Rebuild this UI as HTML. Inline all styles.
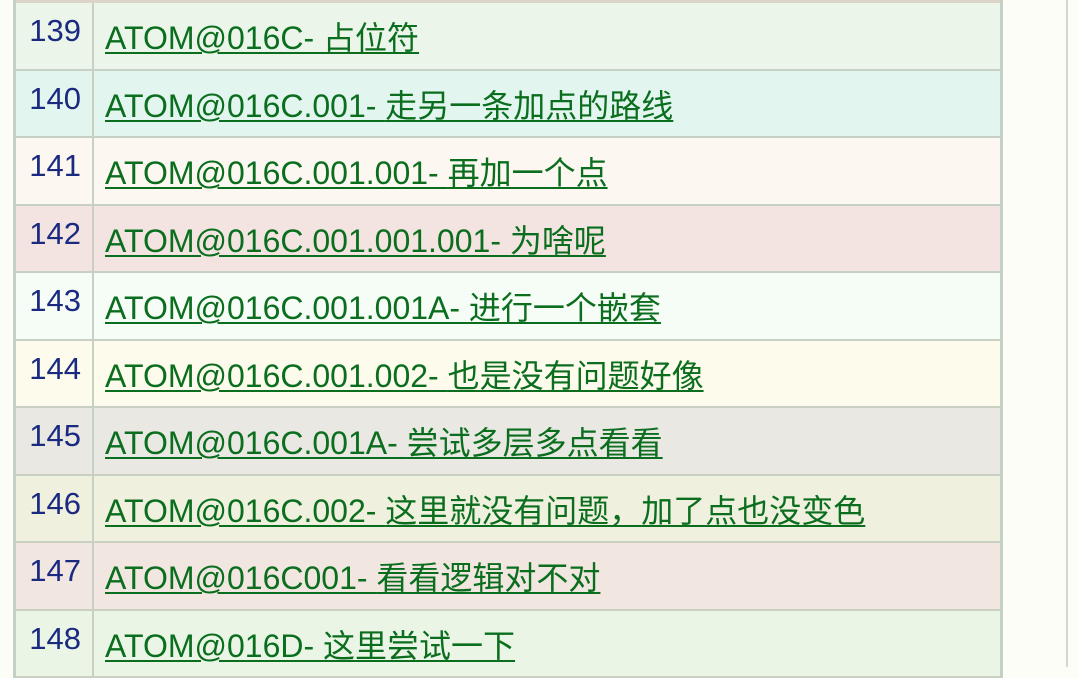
<!DOCTYPE html>
<html><head><meta charset="utf-8"><style>
body{margin:0;width:1078px;height:667px;overflow:hidden;background:#fdfdf8;font-family:"Liberation Sans","Noto Sans CJK SC",sans-serif;position:relative}
.vl{position:absolute;left:1066px;top:0;width:2px;height:667px;background:#d4d8cc}
.tbl{position:absolute;left:13px;top:0;width:984px;border-left:3px solid #c4d0c4;border-right:3px solid #c4d0c4}
.top{height:3px;background:#dcd4c8}
.r{position:relative;height:65.5px;border-bottom:2px solid #c8d0c4}
.n{position:absolute;left:0;top:0;height:100%;border-right:2px solid #c8d0c4;text-align:right;color:#1a2a80;font-size:31px;line-height:30px;padding-top:13px;box-sizing:border-box;width:78px}
.n span{margin-right:11px}
.l{position:absolute;left:89px;top:17px;font-size:32px;line-height:36px;color:#0a6e1e;text-decoration:underline;text-decoration-thickness:2px;text-underline-offset:3px;white-space:nowrap}
.l b{font-weight:normal;font-size:32px}
</style></head><body>
<div class="vl"></div>
<div class="tbl">
<div class="top"></div>
<div class="r" style="background:#ecf5ea"><div class="n"><span>139</span></div><div class="l">ATOM@016C- <b>占位符</b></div></div>
<div class="r" style="background:#e3f5ef"><div class="n"><span>140</span></div><div class="l">ATOM@016C.001- <b>走另一条加点的路线</b></div></div>
<div class="r" style="background:#fcf7f0"><div class="n"><span>141</span></div><div class="l">ATOM@016C.001.001- <b>再加一个点</b></div></div>
<div class="r" style="background:#f4e4e1"><div class="n"><span>142</span></div><div class="l">ATOM@016C.001.001.001- <b>为啥呢</b></div></div>
<div class="r" style="background:#f6fcf6"><div class="n"><span>143</span></div><div class="l">ATOM@016C.001.001A- <b>进行一个嵌套</b></div></div>
<div class="r" style="background:#fdfbeb"><div class="n"><span>144</span></div><div class="l">ATOM@016C.001.002- <b>也是没有问题好像</b></div></div>
<div class="r" style="background:#eae8e3"><div class="n"><span>145</span></div><div class="l">ATOM@016C.001A- <b>尝试多层多点看看</b></div></div>
<div class="r" style="background:#f0f0df"><div class="n"><span>146</span></div><div class="l">ATOM@016C.002- <b>这里就没有问题，加了点也没变色</b></div></div>
<div class="r" style="background:#f2e6e1"><div class="n"><span>147</span></div><div class="l">ATOM@016C001- <b>看看逻辑对不对</b></div></div>
<div class="r" style="background:#eaf5e6"><div class="n"><span>148</span></div><div class="l">ATOM@016D- <b>这里尝试一下</b></div></div>
</div>
</body></html>
